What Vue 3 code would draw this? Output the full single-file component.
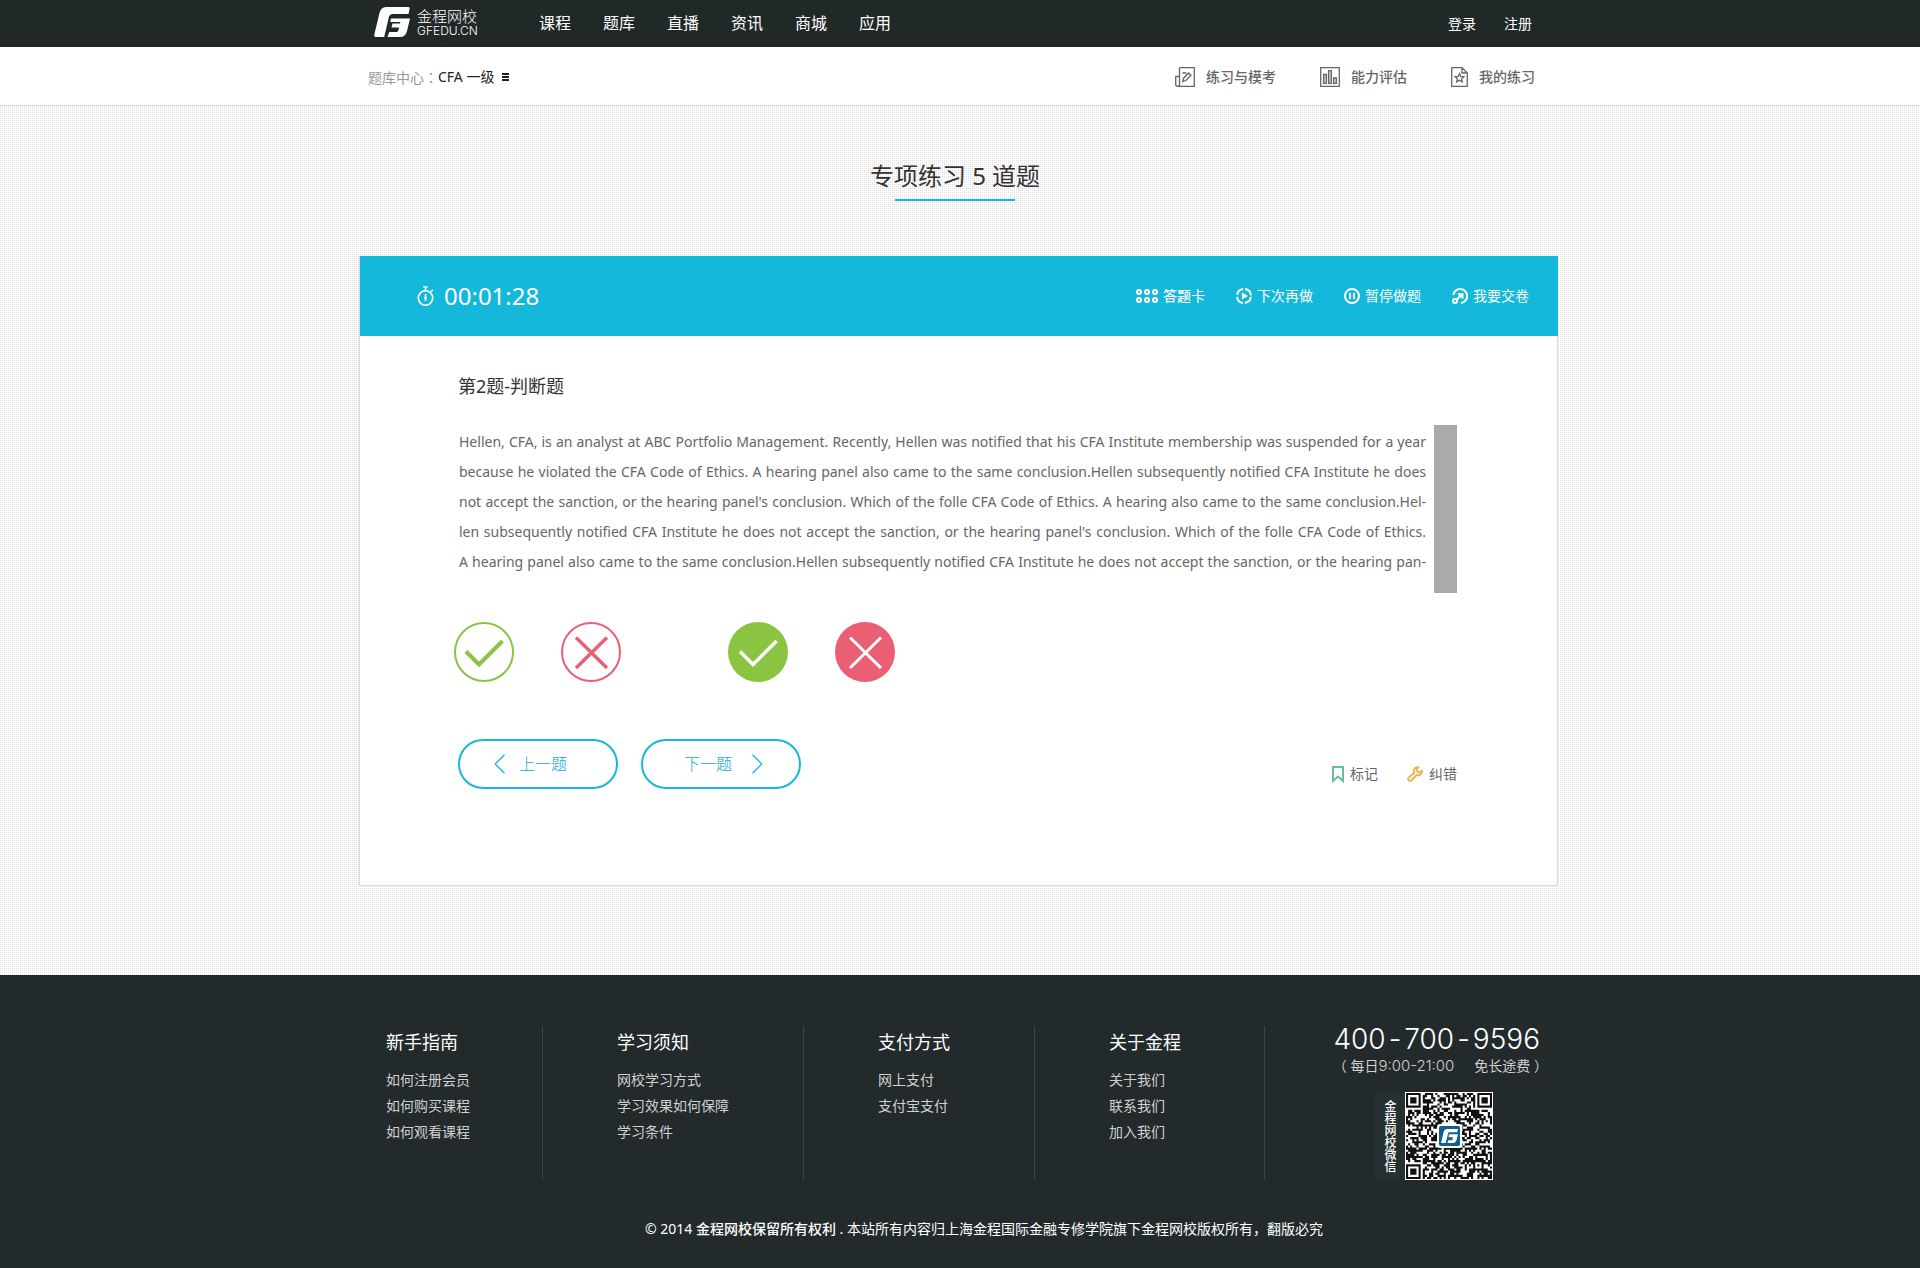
<script setup>
const mainNav = ['课程', '题库', '直播', '资讯', '商城', '应用']

const passage = [
  'Hellen, CFA, is an analyst at ABC Portfolio Management. Recently, Hellen was notified that his CFA Institute membership was suspended for a year',
  'because he violated the CFA Code of Ethics. A hearing panel also came to the same conclusion.Hellen subsequently notified CFA Institute he does',
  "not accept the sanction, or the hearing panel's conclusion. Which of the folle CFA Code of Ethics. A hearing also came to the same conclusion.Hel-",
  "len subsequently notified CFA Institute he does not accept the sanction, or the hearing panel's conclusion. Which of the folle CFA Code of Ethics.",
  'A hearing panel also came to the same conclusion.Hellen subsequently notified CFA Institute he does not accept the sanction, or the hearing pan-',
]

const columns = [
  { title: '新手指南', links: ['如何注册会员', '如何购买课程', '如何观看课程'] },
  { title: '学习须知', links: ['网校学习方式', '学习效果如何保障', '学习条件'] },
  { title: '支付方式', links: ['网上支付', '支付宝支付'] },
  { title: '关于金程', links: ['关于我们', '联系我们', '加入我们'] },
]

// Version 6 code: 41 x 41 modules, three finders and one alignment square
const SIZE = 41
function buildCode() {
  let seed = 20149
  const next = () => {
    seed = (seed * 1103515245 + 12345) % 2147483648
    return seed / 2147483648
  }
  const ring = (x, y, cx, cy, r) => {
    const d = Math.max(Math.abs(x - cx), Math.abs(y - cy))
    return d > r ? null : d
  }
  let d = ''
  for (let y = 0; y < SIZE; y++) {
    for (let x = 0; x < SIZE; x++) {
      let on = next() > 0.45
      for (const [cx, cy] of [[3, 3], [SIZE - 4, 3], [3, SIZE - 4]]) {
        const k = ring(x, y, cx, cy, 4)
        if (k !== null) on = k !== 4 && k !== 2
      }
      const a = ring(x, y, 34, 34, 2)
      if (a !== null) on = a !== 1
      if (on) d += `M${x} ${y}h1v1h-1z`
    }
  }
  return d
}
const code = buildCode()
</script>

<template>
  <div class="page">
    <header class="top">
      <div class="wrap top-in">
        <a class="logo" href="#">
          <svg width="36" height="30" viewBox="0 0 36 30" aria-hidden="true">
            <path fill="#fff" d="M12 0H34Q36 0 35.600 2L34.500 7H19Q15.500 7 14.800 10.500L10.200 30H2Q-.3 30 .3 27.500L5.500 6Q7 0 12 0Z" />
            <path fill="#fff" d="M17 11.500H36L33 24Q31.500 30 26 30H13.500L15.300 25H22.500Q24 25 24.500 23L25 20.500H17.500L18.500 16.500H26L26.300 15H16.200Z" />
          </svg>
          <span class="logo-text">
            <span class="logo-cn">金程网校</span>
            <span class="logo-en">GFEDU.CN</span>
          </span>
        </a>
        <nav class="main-nav">
          <a v-for="n in mainNav" :key="n" href="#">{{ n }}</a>
        </nav>
        <div class="account">
          <a href="#">登录</a>
          <a href="#">注册</a>
        </div>
      </div>
    </header>

    <div class="sub">
      <div class="wrap sub-in">
        <div class="crumb">
          <span class="muted">题库中心<span class="colon">：</span></span>
          <button type="button" class="pick">
            CFA 一级
            <svg width="7" height="8" viewBox="0 0 7 8" aria-hidden="true"><path d="M0 1h7M0 4h7M0 7h7" stroke="#222" stroke-width="2" /></svg>
          </button>
        </div>
        <nav class="sub-nav">
          <a href="#">
            <svg width="20" height="20" viewBox="0 0 20 20" fill="none" stroke="#666" stroke-width="1.300" aria-hidden="true">
              <path d="M4.500 19.300V1.500Q4.500.7 5.300.7H19.300V19.300H2.500Q.7 19.300.7 17.500V9.500H4.500V17.500Q4.500 19.300 2.600 19.300M7.500 6h4" />
              <path d="M7.800 14.500L8.600 11.200L13.700 6L16 8.200L10.900 13.500Z" />
            </svg>
            <span>练习与模考</span>
          </a>
          <a href="#">
            <svg width="20" height="20" viewBox="0 0 20 20" fill="none" stroke="#666" stroke-width="1.300" aria-hidden="true">
              <path d="M.7.7H19.300V19.300H.7Z" />
              <path fill="#ccc" d="M3.600 7.500H6.400V16.400H3.600ZM8.600 3.600H11.400V16.400H8.600ZM13.600 11H16.400V16.400H13.600Z" />
            </svg>
            <span>能力评估</span>
          </a>
          <a href="#">
            <svg width="17" height="20" viewBox="0 0 17 20" fill="none" stroke="#666" stroke-width="1.300" aria-hidden="true">
              <path d="M.7.7H11L16.300 6V19.300H.7ZM11 .7V6H16.300" />
              <path d="M8.500 6.500L9.800 9.400L12.900 9.700L10.600 11.800L11.300 14.900L8.500 13.300L5.700 14.900L6.400 11.800L4.100 9.700L7.200 9.400Z" />
            </svg>
            <span>我的练习</span>
          </a>
        </nav>
      </div>
    </div>

    <main class="wrap main">
      <div class="heading"><h1>专项练习 5 道题</h1></div>

      <section class="card">
        <div class="bar">
          <div class="timer">
            <svg width="17" height="20" viewBox="0 0 17 20" fill="none" stroke="#fff" stroke-width="1.600" aria-hidden="true">
              <circle cx="8.500" cy="12" r="7.200" />
              <path d="M8.500 1V5M6.300 1H10.700M13.800 5.800L15.800 3.800M8.500 8V15M7 12H10" />
            </svg>
            <time>00:01:28</time>
          </div>
          <div class="tools">
            <button type="button">
              <svg width="22" height="14" viewBox="0 0 22 14" fill="none" stroke="#fff" stroke-width="2" aria-hidden="true">
                <circle cx="3" cy="3" r="2" /><circle cx="11" cy="3" r="2" /><circle cx="19" cy="3" r="2" />
                <circle cx="3" cy="11" r="2" /><circle cx="11" cy="11" r="2" /><circle cx="19" cy="11" r="2" />
              </svg>
              <span><b>答题</b>卡</span>
            </button>
            <button type="button">
              <svg width="16" height="16" viewBox="0 0 16 16" fill="none" stroke="#fff" stroke-width="2" aria-hidden="true">
                <circle cx="8" cy="8" r="7" stroke-dasharray="9 2" stroke-dashoffset="-1" />
                <path fill="#fff" stroke="none" d="M6 4.500L12 8L6 11.500Z" />
              </svg>
              <span>下次再做</span>
            </button>
            <button type="button">
              <svg width="16" height="16" viewBox="0 0 16 16" fill="none" stroke="#fff" stroke-width="2" aria-hidden="true">
                <circle cx="8" cy="8" r="7" /><path d="M6 5V11M10 5V11" />
              </svg>
              <span>暂停做题</span>
            </button>
            <button type="button">
              <svg width="16" height="16" viewBox="0 0 16 16" fill="none" stroke="#fff" stroke-width="2" aria-hidden="true">
                <path d="M1.200 7A7 7 0 1 1 9 15M6 6.200H10.500V10.500M10.300 6.200L4.600 11.800" /><circle cx="3" cy="13" r="2" />
              </svg>
              <span>我要交卷</span>
            </button>
          </div>
        </div>

        <div class="body">
          <h2>第2题-判断题</h2>
          <div class="reader">
            <p><span v-for="(l, i) in passage" :key="i">{{ l }}</span></p>
            <div class="thumb"></div>
          </div>

          <div class="answers">
            <button type="button" class="round yes" aria-label="正确">
              <svg width="60" height="60" viewBox="0 0 60 60" fill="none" aria-hidden="true"><circle cx="30" cy="30" r="29" stroke-width="2" /><path stroke-width="4" d="M12 29.500L25 42.500L48.500 19" /></svg>
            </button>
            <button type="button" class="round no" aria-label="错误">
              <svg width="60" height="60" viewBox="0 0 60 60" fill="none" aria-hidden="true"><circle cx="30" cy="30" r="29" stroke-width="2" /><path stroke-width="3.500" d="M15 15.500L46 46M46 15.500L15 46" /></svg>
            </button>
            <button type="button" class="round yes full" aria-label="已选正确">
              <svg width="60" height="60" viewBox="0 0 60 60" fill="none" aria-hidden="true"><circle cx="30" cy="30" r="30" /><path stroke-width="3.500" d="M12 29.500L25 42.500L48.500 19" /></svg>
            </button>
            <button type="button" class="round no full" aria-label="已选错误">
              <svg width="60" height="60" viewBox="0 0 60 60" fill="none" aria-hidden="true"><circle cx="30" cy="30" r="30" /><path stroke-width="3" d="M15 15.500L46 46M46 15.500L15 46" /></svg>
            </button>
          </div>

          <div class="actions">
            <button type="button" class="pill prev">
              <svg width="11" height="20" viewBox="0 0 11 20" fill="none" stroke="#14b8da" stroke-width="1.300" aria-hidden="true"><path d="M10.500.7L1.200 10L10.500 19.300" /></svg>
              <span>上一题</span>
            </button>
            <button type="button" class="pill next">
              <span>下一题</span>
              <svg width="11" height="20" viewBox="0 0 11 20" fill="none" stroke="#14b8da" stroke-width="1.300" aria-hidden="true"><path d="M.5.7L9.800 10L.5 19.300" /></svg>
            </button>
            <div class="marks">
              <button type="button">
                <svg width="12" height="17" viewBox="0 0 12 17" fill="none" stroke="#67c194" stroke-width="2" aria-hidden="true"><path d="M1 1H11V15L6 10.500L1 15Z" /></svg>
                <span>标记</span>
              </button>
              <button type="button">
                <svg width="16" height="16" viewBox="0 0 16 16" fill="none" stroke="#e8b656" stroke-width="2" stroke-linejoin="round" stroke-linecap="round" aria-hidden="true">
                  <path d="M11.500 1.200Q7.500 1 6.800 4.500Q6.700 6 7.200 7L1.700 11.500Q.6 13 1.800 14.300Q3.200 15.500 4.600 14.300L9.500 9Q12 9.800 13.800 8.200Q15.300 6.800 15 4.600L12.800 6.200L10.500 6L9.800 3.500Z" />
                </svg>
                <span>纠错</span>
              </button>
            </div>
          </div>
        </div>
      </section>
    </main>

    <footer class="foot">
      <div class="wrap foot-in">
        <section v-for="c in columns" :key="c.title" class="col">
          <h3>{{ c.title }}</h3>
          <ul>
            <li v-for="l in c.links" :key="l"><a href="#">{{ l }}</a></li>
          </ul>
        </section>
        <section class="contact">
          <p class="phone">400<i>-</i>700<i>-</i>9596</p>
          <p class="hours"><span>（ 每日<time>9:00-21:00</time></span><span>免长途费 ）</span></p>
          <div class="wechat">
            <span class="vert">金程网校微信</span>
            <svg class="qr" width="88" height="88" viewBox="0 0 88 88" aria-hidden="true">
              <path fill="#fff" d="M0 0H88V88H0Z" />
              <svg x="1" y="1" width="86" height="86" viewBox="0 0 41 41"><path fill="#111" :d="code" /></svg>
              <rect x="32" y="32" width="25" height="24" rx="3" fill="#fff" />
              <rect x="34" y="34" width="21" height="20" rx="2" fill="#0f5f8f" />
              <svg x="36" y="37" width="17" height="14" viewBox="0 0 36 30">
                <path fill="#fff" d="M12 0H36L34.500 7H18Q15.500 7 14.800 10L10 30H0L5.500 6Q7 0 12 0Z" />
                <path fill="#fff" d="M17 11.500H36L33 24Q31.500 30 26 30H13.500L15.300 24H24L25.500 17.500H16Z" />
              </svg>
            </svg>
          </div>
        </section>
      </div>
      <p class="copy">© 2014 <b>金程网校保留所有权利</b> . 本站所有内容归上海金程国际金融专修学院旗下金程网校版权所有，翻版必究</p>
    </footer>
  </div>
</template>

<style>
body { margin: 0; }
</style>

<style scoped>
.page {
  font-family: "Noto Sans", "Noto Sans CJK SC", sans-serif;
  font-size: 14px;
  line-height: 20px;
  color: #666;
  background: conic-gradient(from 0deg at 1px 1px, #fff 270deg, #dedede 270deg) 0 0 / 2px 2px;
}
.page * { box-sizing: border-box; }
h1, h2, h3, p, ul { margin: 0; padding: 0; font-weight: 400; }
li { list-style: none; }
a { color: inherit; text-decoration: none; }
button { margin: 0; padding: 0; border: 0; background: none; font: inherit; color: inherit; cursor: pointer; }
svg { display: block; flex: none; }
.wrap { max-width: 1200px; margin: 0 auto; }

.top { background: #202828; color: #fff; }
.top-in { display: flex; align-items: center; height: 47px; padding: 0 28px 0 14px; }
.logo { display: flex; align-items: center; gap: 7px; width: 105px; padding-bottom: 3px; }
.logo-text { display: flex; flex-direction: column; white-space: nowrap; }
.logo-cn { font-size: 15px; line-height: 18px; font-weight: 300; }
.logo-en { font-family: Inter, sans-serif; font-size: 12px; font-weight: 300; line-height: 12px; }
.main-nav { display: flex; gap: 32px; margin-left: 60px; padding-bottom: 2px; font-size: 16px; }
.account { display: flex; gap: 28px; margin-left: auto; }

.sub { background: #fff; border-bottom: 1px solid #ddd; }
.sub-in { display: flex; align-items: center; justify-content: space-between; height: 58px; padding: 2px 25px 0 8px; }
.crumb { display: flex; align-items: center; }
.muted { color: #999; }
.colon { font-family: "Noto Sans CJK TC", sans-serif; }
.pick { display: flex; align-items: center; gap: 8px; color: #222; }
.sub-nav { display: flex; gap: 44px; font-weight: 500; }
.sub-nav a { display: flex; align-items: center; gap: 11px; }

.main { padding: 54px 2px 89px 0; }
.heading { display: flex; justify-content: center; padding-right: 8px; }
h1 { display: flex; flex-direction: column; align-items: center; font-size: 24px; line-height: 32px; color: #333; }
h1::after { content: ""; width: 120px; height: 2px; margin-top: 7px; background: #14b8da; }

.card { margin: 55px 0 0 -1px; background: #fff; border: 1px solid #d9d9d9; border-top: 0; }
.bar { display: flex; align-items: center; justify-content: space-between; height: 80px; margin-right: -1px; padding: 0 29px 0 57px; background: #14b8da; color: #fff; }
.timer { display: flex; align-items: center; gap: 10px; font-size: 24px; line-height: 32px; }
.tools { display: flex; gap: 31px; }
.tools button { display: flex; align-items: center; gap: 5px; }
.tools b { font-weight: 500; }
.body { padding: 37px 100px 96px 98px; }
h2 { font-size: 18px; line-height: 26px; color: #333; }
.reader { display: flex; justify-content: space-between; gap: 8px; margin-top: 26px; padding-left: 1px; }
.reader p { flex: 1; font-size: 14px; line-height: 30px; padding-top: 2px; }
.reader p span { display: block; text-align: justify; text-align-last: justify; white-space: nowrap; }
.thumb { flex: none; width: 23px; height: 168px; background: #aaa; }
.answers { display: flex; gap: 47px; margin: 29px 0 0 -4px; }
.round:nth-child(3) { margin-left: 60px; }
.yes { stroke: #8bc442; }
.no { stroke: #ea6072; }
.yes.full circle { fill: #8bc442; stroke: none; }
.no.full circle { fill: #ea6072; stroke: none; }
.full { stroke: #fff; }
.actions { display: flex; gap: 23px; margin-top: 57px; }
.pill { display: flex; align-items: center; width: 160px; height: 50px; border: 2px solid #14b8da; border-radius: 25px; color: #14a6da; font-size: 16px; font-weight: 300; padding: 0 34px; }
.prev { gap: 14px; }
.next { gap: 20px; padding-left: 41px; }
.marks { display: flex; gap: 29px; margin: 25px 0 0 auto; }
.marks button { display: flex; align-items: center; gap: 6px; height: 20px; }

.foot { background: #222a2b; color: #fff; padding: 51px 0 30px; }
.foot-in { display: grid; grid-template-columns: 183px 261px 231px 230px 1fr; }
.col { border-right: 1px solid #3e4545; padding: 3px 0 0 74px; }
.col:first-child { padding-left: 26px; }
h3 { font-size: 18px; line-height: 26px; }
ul { margin-top: 12px; color: #d0d0d0; }
li { line-height: 26px; }
.contact { display: flex; flex-direction: column; align-items: flex-end; padding-right: 20px; }
.phone { font-family: Inter, sans-serif; font-size: 28px; line-height: 26px; font-weight: 300; }
.phone i { font-style: normal; padding: 0 3px; }
.hours { display: flex; gap: 20px; margin: 4px -8px 0 0; color: #d0d0d0; }
.hours time { font-family: Inter, sans-serif; font-size: 15px; font-weight: 300; }
.wechat { display: flex; margin: 16px 47px 0 0; background: #243031; }
.vert { writing-mode: vertical-rl; width: 31px; padding-right: 1px; font-size: 12px; font-weight: 500; line-height: 30px; text-align: center; }
.copy { margin-top: 39px; padding-left: 48px; text-align: center; }
.copy b { font-weight: 500; }
</style>
